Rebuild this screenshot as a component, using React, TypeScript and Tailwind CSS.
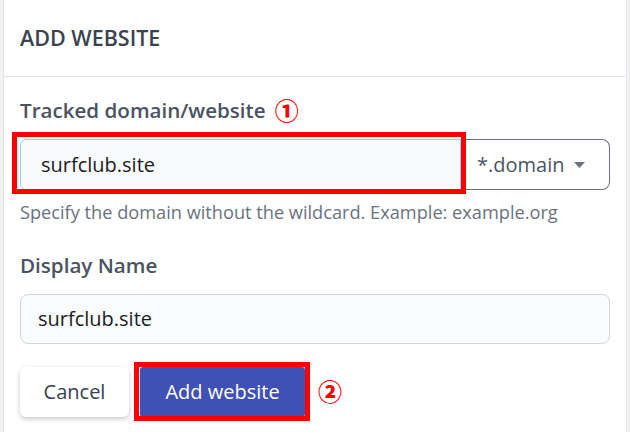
import React from "react";

const font = { fontFamily: '"Open Sans", "Noto Sans", sans-serif' };

function Mark({ n }: { n: string }) {
  return (
    <span
      className="text-[24px] leading-none font-black text-[#ff0000]"
      style={{ fontFamily: '"Noto Sans CJK JP", sans-serif' }}
    >
      {n}
    </span>
  );
}

export default function App() {
  return (
    <div className="h-[432px] w-[630px] overflow-hidden bg-[#f1f2f4] px-[3px]" style={font}>
      <div className="h-full bg-white border-x border-[#e5e7eb]">
        <div className="h-[77px] flex items-center px-4 border-b border-[#e2e4e8]">
          <h1 className="text-[21.5px] leading-7 font-semibold text-[#3b4250]">
            ADD WEBSITE
          </h1>
        </div>

        <div className="px-4 pt-[19px]">
          <div className="flex items-center h-7">
            <label className="text-[20.6px] leading-7 font-semibold text-[#4b5261]">
              Tracked domain/website
            </label>
            <span className="ml-[9px] mt-[4px]">
              <Mark n="①" />
            </span>
          </div>

          <div className="relative mt-[15px] flex h-[51px]">
            <div className="flex-1 flex items-center rounded-l-md border border-[#a5c8f8] bg-[#f9fafc] pl-5 text-[20px] text-[#1a1d24]">
              surfclub.site
            </div>
            <div className="w-[149px] flex items-center pl-4 border border-l-0 border-[#6b7280] rounded-r-lg bg-white text-[20px] text-[#4b5563]">
              *.domain
              <svg className="ml-[10px]" width="11" height="6" viewBox="0 0 11 6">
                <path d="M0 0 L11 0 L5.5 6 Z" fill="#6b7280" />
              </svg>
            </div>
            <div className="pointer-events-none absolute -left-[8px] -top-[7px] w-[454px] h-[62px] border-[5px] border-[#ff0000]" />
          </div>

          <p className="mt-[10px] text-[18.2px] leading-6 text-[#6b7280]">
            Specify the domain without the wildcard. Example: example.org
          </p>

          <label className="block mt-[27px] text-[20.6px] leading-7 font-semibold text-[#4b5261]">
            Display Name
          </label>

          <div className="mt-[15px] h-[50px] flex items-center rounded-lg border border-[#d1d5db] bg-[#fafbfd] pl-[17px] text-[20px] text-[#1a1d24]">
            surfclub.site
          </div>

          <div className="mt-[23px] flex items-center">
            <button className="h-[50px] w-[109px] rounded-md bg-white text-[20px] text-[#374151] shadow-[0_2px_5px_rgba(0,0,0,0.22)]">
              Cancel
            </button>
            <div className="relative ml-[11px]">
              <button className="h-[50px] w-[165px] rounded-[3px] bg-[#3f51b5] text-[20px] text-white">
                Add website
              </button>
              <div className="pointer-events-none absolute -left-[6px] -top-[5px] w-[176px] h-[59px] border-[5px] border-[#ff0000]" />
            </div>
            <span className="ml-[13px] mt-[2px]">
              <Mark n="②" />
            </span>
          </div>
        </div>
      </div>
    </div>
  );
}
